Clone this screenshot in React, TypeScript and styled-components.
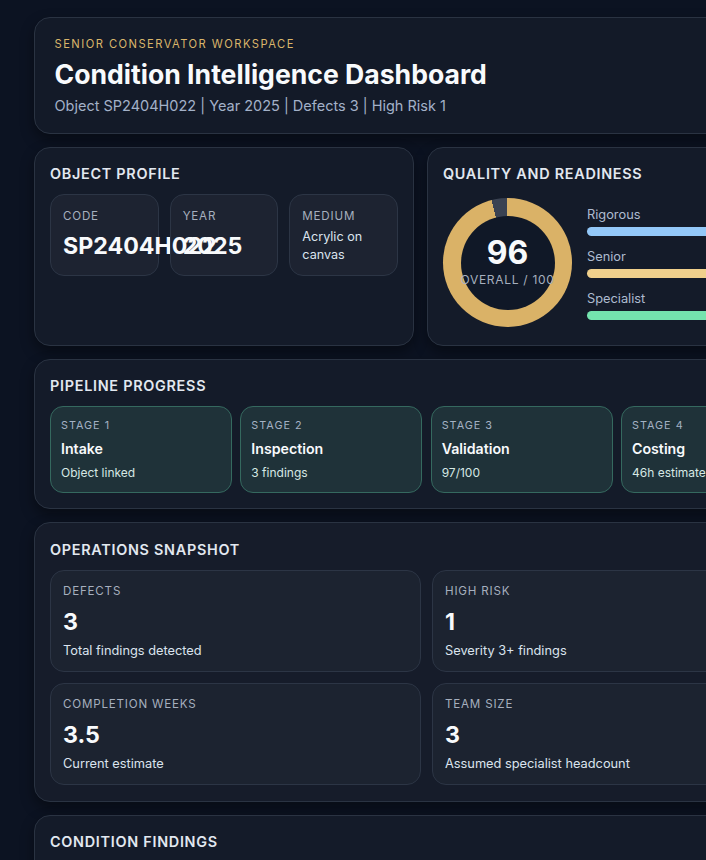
import React from "react";
import styled, { createGlobalStyle } from "styled-components";

const Global = createGlobalStyle`
  html, body { margin: 0; padding: 0; height: 860px; overflow: hidden; background: #0c1322; }
  body { font-family: Inter, "Liberation Sans", sans-serif; -webkit-font-smoothing: antialiased; }
`;

const Page = styled.div`
  width: 706px;
  height: 860px;
  overflow: hidden;
  box-sizing: border-box;
  padding: 17px 0 0 34px;
  background: #0c1322;
`;

const Column = styled.main`
  width: 785px;
  display: flex;
  flex-direction: column;
  gap: 13px;
`;

const Panel = styled.section<{ $minHeight?: number }>`
  box-sizing: border-box;
  min-width: 0;
  padding: 15px;
  border: 1px solid #2a3342;
  border-radius: 16px;
  background: #141b29;
  box-shadow: 0 6px 14px rgba(0, 0, 0, 0.4);
  ${(p) => (p.$minHeight ? `min-height: ${p.$minHeight}px;` : "")}
`;

const Hero = styled(Panel)`
  height: 117px;
  padding: 18px 19.5px;
  background: #131a28;
`;

const Eyebrow = styled.div`
  font-size: 11.2px;
  line-height: 16px;
  letter-spacing: 1.45px;
  color: #d9b56a;
`;

const Title = styled.h1`
  margin: 5px 0 0;
  font-size: 26.6px;
  line-height: 34px;
  font-weight: 700;
  color: #f8fafc;
`;

const Subtitle = styled.p`
  margin: 4px 0 0;
  font-size: 14.5px;
  line-height: 22px;
  color: #a3b1c8;
`;

const TopRow = styled.div`
  display: grid;
  grid-template-columns: 380px minmax(0, 1fr);
  gap: 13px;
`;

const SectionTitle = styled.h2`
  margin: 0 0 9px;
  font-size: 14.4px;
  line-height: 22px;
  font-weight: 600;
  letter-spacing: 0.72px;
  color: #e2e8f0;
`;

const ProfileGrid = styled.div`
  display: grid;
  grid-template-columns: repeat(3, minmax(0, 1fr));
  gap: 11px;
`;

const SoftCard = styled.div`
  box-sizing: border-box;
  min-width: 0;
  border: 1px solid #2c3545;
  border-radius: 14px;
  background: rgba(255, 255, 255, 0.04);
`;

const ProfileCard = styled(SoftCard)`
  height: 82px;
  padding: 13px 12px;
`;

const CardLabel = styled.div`
  font-size: 11.6px;
  line-height: 16px;
  letter-spacing: 0.8px;
  color: #a6afbe;
`;

const ProfileValue = styled.div`
  margin-top: 7px;
  font-size: 23.2px;
  line-height: 30px;
  font-weight: 700;
  color: #f8fafc;
`;

const ProfileText = styled.div`
  margin-top: 4px;
  font-size: 12.6px;
  line-height: 18px;
  color: #dbe3ee;
`;

const QualityBody = styled.div`
  display: flex;
  gap: 15px;
  align-items: flex-start;
  padding-top: 4px;
`;

const Ring = styled.div<{ $score: number }>`
  flex: none;
  width: 129px;
  height: 129px;
  border-radius: 50%;
  display: flex;
  align-items: center;
  justify-content: center;
  background: conic-gradient(#dab267 0 ${(p) => p.$score}%, #3a4252 ${(p) => p.$score}% 100%);
`;

const RingHole = styled.div`
  flex: none;
  box-sizing: border-box;
  width: 94px;
  height: 94px;
  padding-bottom: 3px;
  border-radius: 50%;
  background: #101827;
  display: flex;
  flex-direction: column;
  align-items: center;
  justify-content: center;
`;

const RingScore = styled.div`
  font-size: 32px;
  line-height: 38px;
  font-weight: 700;
  color: #f8fafc;
`;

const RingCaption = styled.div`
  white-space: nowrap;
  font-size: 12px;
  line-height: 16px;
  letter-spacing: 0.7px;
  color: #a6afbe;
`;

const Bars = styled.div`
  flex: 1;
  display: flex;
  flex-direction: column;
  gap: 12px;
  padding-top: 8px;
`;

const BarLabel = styled.div`
  font-size: 12.8px;
  line-height: 18px;
  color: #aebbd0;
`;

const Bar = styled.div<{ $color: string }>`
  margin-top: 3px;
  height: 9px;
  border-radius: 5px;
  background: ${(p) => p.$color};
`;

const Stages = styled.div`
  display: grid;
  grid-template-columns: repeat(4, 182px);
  justify-content: space-between;
`;

const StageCard = styled.div`
  box-sizing: border-box;
  height: 87px;
  padding: 11px 10px;
  border: 1px solid #35695f;
  border-radius: 13px;
  background: #1f3239;
`;

const StageLabel = styled.div`
  font-size: 10.8px;
  line-height: 16px;
  letter-spacing: 1px;
  color: #a3b1c3;
`;

const StageName = styled.div`
  margin-top: 5px;
  font-size: 14.2px;
  line-height: 20px;
  font-weight: 600;
  color: #f8fafc;
`;

const StageNote = styled.div`
  margin-top: 6px;
  font-size: 12px;
  line-height: 16px;
  color: #d6e8e4;
`;

const OpsPanel = styled(Panel)`
  padding-bottom: 16px;
  background: #161c2a;
`;

const OpsGrid = styled.div`
  display: grid;
  grid-template-columns: repeat(2, minmax(0, 1fr));
  gap: 11px;
  margin-top: 9px;
`;

const OpsTitle = styled(SectionTitle)`
  margin: 1px 0 0;
`;

const OpsCard = styled(SoftCard)`
  height: 102px;
  padding: 12px;
  background: #1c2330;
`;

const OpsValue = styled.div`
  margin-top: 8px;
  font-size: 23.2px;
  line-height: 30px;
  font-weight: 700;
  color: #f8fafc;
`;

const OpsNote = styled.div`
  margin-top: 5px;
  font-size: 12.8px;
  line-height: 18px;
  color: #dbe3ee;
`;

const stages = [
  ["STAGE 1", "Intake", "Object linked"],
  ["STAGE 2", "Inspection", "3 findings"],
  ["STAGE 3", "Validation", "97/100"],
  ["STAGE 4", "Costing", "46h estimate"],
];

const ops = [
  ["DEFECTS", "3", "Total findings detected"],
  ["HIGH RISK", "1", "Severity 3+ findings"],
  ["COMPLETION WEEKS", "3.5", "Current estimate"],
  ["TEAM SIZE", "3", "Assumed specialist headcount"],
];

const bars = [
  ["Rigorous", "#93c8f8"],
  ["Senior", "#f0d08c"],
  ["Specialist", "#74e3ae"],
];

export default function App() {
  return (
    <Page>
      <Global />
      <Column>
        <Hero>
          <Eyebrow>SENIOR CONSERVATOR WORKSPACE</Eyebrow>
          <Title>Condition Intelligence Dashboard</Title>
          <Subtitle>Object SP2404H022 | Year 2025 | Defects 3 | High Risk 1</Subtitle>
        </Hero>
        <TopRow>
          <Panel $minHeight={199}>
            <SectionTitle>OBJECT PROFILE</SectionTitle>
            <ProfileGrid>
              <ProfileCard>
                <CardLabel>CODE</CardLabel>
                <ProfileValue>SP2404H022</ProfileValue>
              </ProfileCard>
              <ProfileCard>
                <CardLabel>YEAR</CardLabel>
                <ProfileValue>2025</ProfileValue>
              </ProfileCard>
              <ProfileCard>
                <CardLabel>MEDIUM</CardLabel>
                <ProfileText>Acrylic on canvas</ProfileText>
              </ProfileCard>
            </ProfileGrid>
          </Panel>
          <Panel $minHeight={199}>
            <SectionTitle>QUALITY AND READINESS</SectionTitle>
            <QualityBody>
              <Ring $score={96}>
                <RingHole>
                  <RingScore>96</RingScore>
                  <RingCaption>OVERALL / 100</RingCaption>
                </RingHole>
              </Ring>
              <Bars>
                {bars.map(([label, color]) => (
                  <div key={label}>
                    <BarLabel>{label}</BarLabel>
                    <Bar $color={color} />
                  </div>
                ))}
              </Bars>
            </QualityBody>
          </Panel>
        </TopRow>
        <Panel>
          <SectionTitle>PIPELINE PROGRESS</SectionTitle>
          <Stages>
            {stages.map(([label, name, note]) => (
              <StageCard key={label}>
                <StageLabel>{label}</StageLabel>
                <StageName>{name}</StageName>
                <StageNote>{note}</StageNote>
              </StageCard>
            ))}
          </Stages>
        </Panel>
        <OpsPanel>
          <OpsTitle>OPERATIONS SNAPSHOT</OpsTitle>
          <OpsGrid>
            {ops.map(([label, value, note]) => (
              <OpsCard key={label}>
                <CardLabel>{label}</CardLabel>
                <OpsValue>{value}</OpsValue>
                <OpsNote>{note}</OpsNote>
              </OpsCard>
            ))}
          </OpsGrid>
        </OpsPanel>
        <Panel>
          <SectionTitle>CONDITION FINDINGS</SectionTitle>
        </Panel>
      </Column>
    </Page>
  );
}
